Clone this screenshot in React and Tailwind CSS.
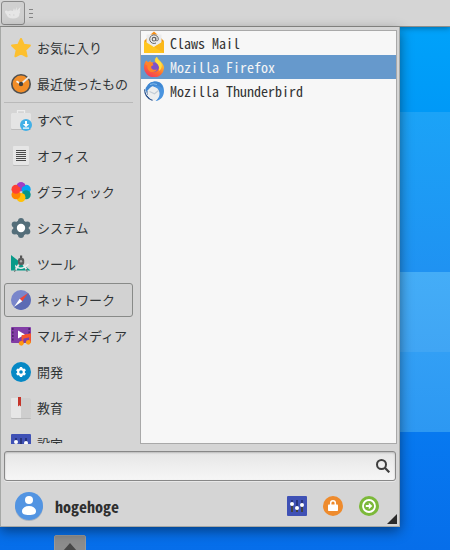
import React from "react";

const svgProps = { width: 20, height: 20, viewBox: "0 0 20 20", "aria-hidden": true, className: "shrink-0" };

function StarIcon() {
  return (
    <svg {...svgProps}>
      <path d="M10 1l2.700 5.700 6.200.8-4.600 4.500 1.300 6.300L10 15.300l-5.600 3 1.300-6.300L1.100 7.500l6.200-.8z" fill="#fdc02f" stroke="#fdc02f" strokeWidth="2" strokeLinejoin="round" />
    </svg>
  );
}

function RecentIcon() {
  return (
    <svg {...svgProps}>
      <circle cx="10" cy="10" r="10" fill="#4f4f4f" />
      <circle cx="10" cy="10" r="8.400" fill="#f28d27" />
      <path d="M10 10L5.500 7.300" stroke="#f5f5f5" strokeWidth="1.800" />
      <path d="M10 10L18 3" stroke="#e9e9e9" strokeWidth="1.800" />
      <circle cx="10" cy="10" r="2.200" fill="#404040" />
    </svg>
  );
}

function AllIcon() {
  return (
    <svg {...svgProps} className="shrink-0 overflow-visible">
      <path d="M6.500 3V.600h7V3" fill="none" stroke="#ededed" strokeWidth="1.200" />
      <rect x="0" y="3" width="20" height="17" rx="1" fill="#bdbdbd" />
      <rect x="0" y="3" width="20" height="16" rx="1" fill="#e4e4e4" />
      <circle cx="15" cy="15" r="6" fill="#43b0e6" />
      <path d="M14 11h2v3h2.200L15 17.200 11.800 14H14z" fill="#fff" />
      <rect x="12" y="17.500" width="6" height="1.200" fill="#fff" />
    </svg>
  );
}

function OfficeIcon() {
  return (
    <svg {...svgProps}>
      <rect x="2" y="1" width="16" height="19" rx="1" fill="#bcbcbc" />
      <rect x="2" y="0" width="16" height="19" rx="1" fill="#e6e6e6" />
      <path d="M5 4.500h10M5 6.500h10M5 8.500h10M5 10.500h10M5 12.500h10M5 14.500h10" stroke="#4b4b4b" />
    </svg>
  );
}

function GraphicsIcon() {
  return (
    <svg {...svgProps}>
      <circle cx="10" cy="4.700" r="4.500" fill="#a13ec4" />
      <circle cx="15.200" cy="7.300" r="4.500" fill="#03a5f4" />
      <circle cx="15.200" cy="12.700" r="4.500" fill="#059588" />
      <circle cx="10" cy="15.500" r="4.500" fill="#ffc107" />
      <circle cx="5" cy="12.700" r="4.500" fill="#ff8500" />
      <circle cx="5" cy="7.300" r="4.500" fill="#ff4033" />
      <path d="M10 10V5.500A4.500 4.500 0 0 1 6 2.600 4.500 4.500 0 0 1 14.400 4 4.500 4.500 0 0 0 10 10z" fill="#a13ec4" />
    </svg>
  );
}

function SystemIcon() {
  return (
    <svg {...svgProps}>
      <g fill="#546e7a">
        <circle cx="10" cy="10" r="7.800" />
        <circle cx="10" cy="3" r="3" />
        <circle cx="10" cy="17" r="3" />
        <circle cx="3.700" cy="6.500" r="3" />
        <circle cx="16.300" cy="6.500" r="3" />
        <circle cx="3.700" cy="13.500" r="3" />
        <circle cx="16.300" cy="13.500" r="3" />
      </g>
      <circle cx="10" cy="10" r="4.200" fill="#fff" />
    </svg>
  );
}

function ToolsIcon() {
  return (
    <svg {...svgProps}>
      <path d="M0 1l19.500 15.500H0z" fill="#089a89" />
      <path d="M4 10.500l3.500 3H4z" fill="#d5d5d5" />
      <path d="M9 8.500L4.500 16M11 8.500L15.500 15.500" stroke="#e7e7e7" strokeWidth="1.800" />
      <path d="M5.500 12.500q5 4.500 12-2.500" fill="none" stroke="#eee" strokeWidth="1.400" />
      <path d="M4.500 15.500L3.500 18M15.200 15l1 3" stroke="#777" />
      <path d="M9 1.500h2.200V5H9z" fill="#555" />
      <rect x="7" y="4" width="6.200" height="7" rx="2" fill="#5d5d5d" />
      <circle cx="10" cy="7.300" r="1.200" fill="#aaa" />
    </svg>
  );
}

function NetworkIcon() {
  return (
    <svg {...svgProps}>
      <circle cx="10" cy="10" r="10" fill="#7986cb" />
      <path d="M17.070 2.930A10 10 0 0 1 2.930 17.070z" fill="#5c6bb4" />
      <path d="M17 3l-5.700 8.300-2.600-2.600z" fill="#f04438" />
      <path d="M3 17l5.700-8.300 2.600 2.600z" fill="#fff" />
    </svg>
  );
}

function MultimediaIcon() {
  return (
    <svg {...svgProps}>
      <rect y="1" width="20" height="16" rx="1" fill="#823da6" />
      <path d="M1.800 2v14M18.200 2v6" stroke="#4d246b" strokeWidth="1.600" strokeDasharray="2 1.500" />
      <path d="M7 4.500l7 4-7 4z" fill="#fff" />
      <path d="M11.500 17.500V10l7.500-1.500v8" fill="none" stroke="#f9542b" strokeWidth="1.800" />
      <path d="M11 9.500l8.500-2v3.500L11 13z" fill="#f9542b" />
      <circle cx="10.300" cy="17.300" r="2.400" fill="#ff9a10" />
      <circle cx="17.300" cy="16.300" r="2.400" fill="#ff9a10" />
    </svg>
  );
}

function DevelopIcon() {
  return (
    <svg {...svgProps}>
      <circle cx="10" cy="10" r="10" fill="#0588c5" />
      <g fill="#fff">
        <circle cx="10" cy="10" r="3.900" />
        <path d="M8.800 5h2.400v10H8.800z" />
        <path d="M8.800 5h2.400v10H8.800z" transform="rotate(60 10 10)" />
        <path d="M8.800 5h2.400v10H8.800z" transform="rotate(120 10 10)" />
      </g>
      <circle cx="10" cy="10" r="1.800" fill="#0588c5" />
    </svg>
  );
}

function EducationIcon() {
  return (
    <svg {...svgProps} className="shrink-0 overflow-visible">
      <rect y="1" width="20" height="20" rx="1" fill="#b9b9b9" />
      <rect width="20" height="20" rx="1" fill="#e6e6e6" />
      <path d="M10 0h9a1 1 0 0 1 1 1v18a1 1 0 0 1-1 1h-9z" fill="#cecece" />
      <path d="M7 -1h3v9.500L8.500 7.300 7 8.500z" fill="#c5352b" />
    </svg>
  );
}

function MixerIcon() {
  return (
    <svg {...svgProps}>
      <rect width="20" height="20" rx="1" fill="#3f51b5" />
      <path d="M5 4v12M10 4v12M15 4v12" stroke="#29357d" strokeWidth="2" />
      <path d="M5 9v7M10 13v3M15 10v6" stroke="#424242" strokeWidth="2" />
      <g fill="#fff">
        <circle cx="5" cy="8" r="2" />
        <circle cx="10" cy="12" r="2" />
        <circle cx="15" cy="9" r="2" />
      </g>
    </svg>
  );
}

function MailIcon() {
  return (
    <svg {...svgProps} className="shrink-0 overflow-visible">
      <path d="M10-1.500L14.500 2.500h-9z" fill="#f78f16" />
      <path d="M0 8l3-3v6zM20 8l-3-3v6z" fill="#ef9c16" />
      <path d="M2.500 1.500h15V13h-15z" fill="#ebebeb" />
      <path d="M0 8l10 6 10-6v12H0z" fill="#ffc61f" />
      <path d="M20 8v12L10 14z" fill="#fbb81a" />
      <circle cx="10" cy="6.200" r="1.800" fill="none" stroke="#666" strokeWidth="1.100" />
      <path d="M11.800 4.300v2.400c0 1.700 2.500 1.500 2.500-.5A4.300 4.300 0 1 0 12 10" fill="none" stroke="#666" />
    </svg>
  );
}

function FirefoxIcon() {
  return (
    <svg {...svgProps}>
      <defs>
        <linearGradient id="fx-body" x1="0.900" y1="0" x2="0.300" y2="1">
          <stop offset="0" stopColor="#ffe84a" />
          <stop offset="0.350" stopColor="#ffb02d" />
          <stop offset="0.650" stopColor="#ff6a30" />
          <stop offset="1" stopColor="#f03a62" />
        </linearGradient>
      </defs>
      <path d="M2.300 3.500L4.500 5.500 6.500 3v2.500L11 5c-.5-2 0-4 2-5 .2 2 2.500 3.200 4 5 2 2 3 4 3 6a9.900 9.500 0 0 1-20-.5C0 7.500.800 5 2.300 3.500z" fill="url(#fx-body)" />
      <ellipse cx="10.500" cy="10" rx="4.500" ry="4.800" fill="#7d51cc" />
      <path d="M.800 7C3 4.500 6 4.500 8.500 5.800l1 2.400c-1.400.2-2.500 1-2.400 2 .4 2.500 3.500 3.300 6 2.100-1.500 3.500-6.600 3.700-8.800.6C3 11 3.500 9 3.500 8.500z" fill="#ff8429" />
      <path d="M13 0c0 2 2.500 3.300 3.800 5.300C18.500 8 18 12 15 14c.7-4-.5-6.500-2.500-7.800C10.800 4.500 11 1.500 13 0z" fill="#ffdf43" />
    </svg>
  );
}

function ThunderbirdIcon() {
  return (
    <svg {...svgProps}>
      <path d="M4 3.500A9 9 0 0 1 12 .500c5 0 8 4 8 9.500s-3.500 9.500-8.500 10q4-3 3.500-8Q12 5 4 3.500z" fill="#4a94df" />
      <path d="M0 8q0 9 8 11.800L11 18 4.500 11z" fill="#29508a" />
      <path d="M4.500 7.500Q9 4 13.500 7.500q3 4 1.500 8-2 4-6 3.500Q4 17.500 3.300 12z" fill="#eceeef" />
      <path d="M4 3.500Q8-.500 13 .800q5 1 6 7.200-3-3.500-7-3.500-4.500 0-7.500 4-2.500 2-2.500 4Q0 8 4 3.500z" fill="#3f87d1" />
      <path d="M5.500 10.500l5 2.300 4-3.300" fill="none" stroke="#c3ccd5" strokeWidth="1.200" />
      <path d="M6 3.500q3-1.500 7 0" fill="none" stroke="#83bdf0" />
      <path d="M1.500 9.500q.5 5 5 8" fill="none" stroke="#dfe7f0" />
    </svg>
  );
}

function UserIcon() {
  return (
    <svg width="28" height="29" viewBox="0 0 28 29" aria-hidden="true" className="shrink-0">
      <circle cx="14" cy="15" r="14" fill="#a9b4c1" />
      <circle cx="14" cy="14" r="14" fill="#5294e2" />
      <circle cx="14" cy="8" r="4" fill="#fff" />
      <path d="M7 19.500c0-3 2.300-5.500 7-5.500s7 2.500 7 5.500c0 2.500-2.500 3.500-7 3.500s-7-1-7-3.500z" fill="#fff" />
    </svg>
  );
}

function LockIcon() {
  return (
    <svg {...svgProps}>
      <circle cx="10" cy="10" r="10" fill="#ee8b2d" />
      <path d="M7.700 9V7a2.300 2.300 0 0 1 4.600 0v2" fill="none" stroke="#fff" strokeWidth="1.500" />
      <rect x="5" y="8.500" width="10" height="6.500" rx="0.800" fill="#fff" />
    </svg>
  );
}

function LogoutIcon() {
  return (
    <svg {...svgProps}>
      <circle cx="10" cy="10" r="10" fill="#7cb93a" />
      <circle cx="10" cy="10" r="6" fill="none" stroke="#fff" strokeWidth="1.800" />
      <path d="M6.800 9h3V6.800L13.300 10l-3.500 3.200V11h-3z" fill="#fff" />
    </svg>
  );
}

function MouseLogo() {
  return (
    <svg width="18" height="18" viewBox="0 0 18 18" aria-hidden="true">
      <path d="M1 7q1.500-1 3 .5Q6 6 9 7l1-3 1 3 1.500-4 .5 3.500L16.500 3l-.800 4q1 1-.2 2.500 0 5-6.500 5-5.500 0-6.500-4Q.800 9.500 1 7z" fill="#e6e6e6" />
      <path d="M5 10.500l1.500.5M9 11h1.500" stroke="#d0d0d0" />
    </svg>
  );
}

const categories = [
  { label: "お気に入り", Icon: StarIcon },
  { label: "最近使ったもの", Icon: RecentIcon },
  { label: "すべて", Icon: AllIcon, separated: true },
  { label: "オフィス", Icon: OfficeIcon },
  { label: "グラフィック", Icon: GraphicsIcon },
  { label: "システム", Icon: SystemIcon },
  { label: "ツール", Icon: ToolsIcon },
  { label: "ネットワーク", Icon: NetworkIcon, selected: true },
  { label: "マルチメディア", Icon: MultimediaIcon },
  { label: "開発", Icon: DevelopIcon },
  { label: "教育", Icon: EducationIcon },
  { label: "設定", Icon: MixerIcon },
];

const apps = [
  { label: "Claws Mail", Icon: MailIcon },
  { label: "Mozilla Firefox", Icon: FirefoxIcon, selected: true },
  { label: "Mozilla Thunderbird", Icon: ThunderbirdIcon },
];

function CategoryItem({ label, Icon, separated, selected }) {
  return (
    <li className={"h-9 pb-px " + (separated ? "border-t border-[#b9b9b9]" : "pt-px")}>
      <button
        type="button"
        aria-pressed={!!selected}
        className={
          "flex h-full w-full items-center gap-1.5 rounded-[3px] border px-1.5 text-left text-[13px] leading-5 whitespace-nowrap " +
          (selected ? "border-[#888a88] bg-[#d2d2d2]" : "border-transparent")
        }
      >
        <Icon />
        <span>{label}</span>
      </button>
    </li>
  );
}

function AppItem({ label, Icon, selected }) {
  return (
    <li>
      <button
        type="button"
        className={
          "flex h-6 w-full items-center gap-1.5 px-[3px] text-left font-['Noto_Sans_Mono_CJK_JP','Liberation_Mono',monospace] text-sm leading-6 whitespace-nowrap " +
          (selected ? "bg-[#6699cc] text-[#f5f5f5]" : "text-[#333333]")
        }
      >
        <Icon />
        <span>{label}</span>
      </button>
    </li>
  );
}

export default function App() {
  return (
    <div className="flex h-screen flex-col overflow-hidden bg-[linear-gradient(180deg,#00a2fa_27px,#0099f7_112px,#1ba3f7_112px,#1f92f2_272px,#44adf7_272px,#40a5f4_352px,#329ff5_352px,#2d98f2_432px,#0779f0_432px,#066eea_550px)] font-['Noto_Sans_CJK_JP',sans-serif] text-[#303436]">
      <header className="flex h-[27px] shrink-0 items-center gap-1 border-b border-[#8e8f8c] bg-[#d5d5d5] pl-px shadow-[0_1px_6px_rgba(0,0,0,0.35)]">
        <button type="button" aria-label="メニュー" className="flex size-6 items-center justify-center rounded-[3px] border border-[#8a8a8a] bg-[#d0d0d0]">
          <MouseLogo />
        </button>
        <span className="flex w-1 flex-col gap-[3px]" aria-hidden="true">
          <span className="h-px bg-[#858585]" />
          <span className="h-px bg-[#858585]" />
          <span className="h-px bg-[#858585]" />
        </span>
      </header>

      <main className="relative flex w-[400px] max-w-full shrink-0 flex-col border border-t-0 border-[#a6a8a6] bg-[#d5d5d5] shadow-[0_4px_12px_rgba(0,0,0,0.45)]">
        <div className="flex h-[417px] gap-[7px] pt-[3px] pr-0.5 pl-[3px]">
          <nav className="w-[129px] shrink-0 overflow-hidden">
            <ul>
              {categories.map((c) => (
                <CategoryItem key={c.label} {...c} />
              ))}
            </ul>
          </nav>
          <ul className="min-w-0 flex-1 border border-[#a9a9a9] bg-[#f7f7f7]">
            {apps.map((a) => (
              <AppItem key={a.label} {...a} />
            ))}
          </ul>
        </div>

        <label className="mx-[3px] mt-[7px] flex h-[30px] items-center rounded-[3px] border border-[#888888] bg-gradient-to-b from-[#e6e6e6] to-[#f6f6f6] pr-[5px] shadow-[inset_0_1px_2px_rgba(0,0,0,0.2),0_1px_0_#e8e8e8]">
          <input type="text" aria-label="検索" className="h-full min-w-0 flex-1 bg-transparent px-2 text-[13px] outline-none" />
          <svg width="14" height="14" viewBox="0 0 14 14" aria-hidden="true">
            <circle cx="5.500" cy="5.500" r="4.500" fill="none" stroke="#3e3e3e" strokeWidth="2" />
            <path d="M8.800 8.800l4.500 4.500" stroke="#3e3e3e" strokeWidth="2.200" />
          </svg>
        </label>

        <footer className="flex h-[45px] items-center pt-[5px] pr-5 pl-3.5">
          <UserIcon />
          <span className="ml-3 flex-1 font-['Noto_Sans_Mono_CJK_JP','Liberation_Mono',monospace] text-base font-bold leading-6 text-[#2f2f2f]">hogehoge</span>
          <div className="flex gap-4">
            <button type="button" aria-label="設定"><MixerIcon /></button>
            <button type="button" aria-label="ロック"><LockIcon /></button>
            <button type="button" aria-label="ログアウト"><LogoutIcon /></button>
          </div>
        </footer>

        <svg width="10" height="10" viewBox="0 0 10 10" aria-hidden="true" className="absolute right-0.5 bottom-0.5">
          <path d="M10 0v10H0z" fill="#2b2b2b" />
        </svg>
      </main>

      <button type="button" aria-label="パネルを表示" className="mt-2 ml-[54px] flex h-8 w-8 shrink-0 justify-center rounded-t-[2px] border border-[#9a9a9a] bg-[#8d8d8d] pt-[7px]">
        <svg width="14" height="8" viewBox="0 0 14 8" aria-hidden="true">
          <path d="M7 0l7 8H0z" fill="#484848" />
        </svg>
      </button>
    </div>
  );
}
